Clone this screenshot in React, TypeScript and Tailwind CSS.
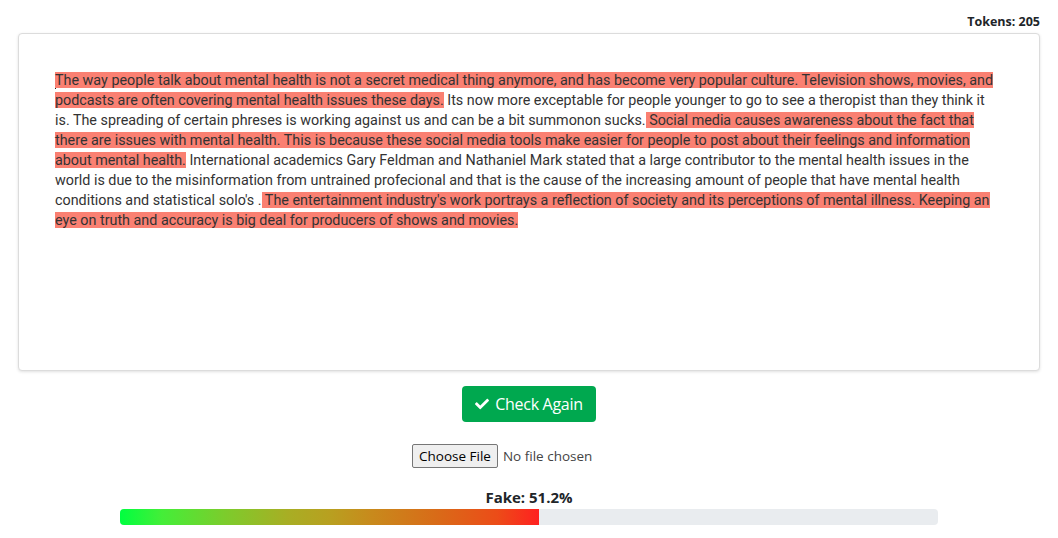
import React from 'react';

type Segment = { text: string; fake: boolean };

const segments: Segment[] = [
  {
    text: 'The way people talk about mental health is not a secret medical thing anymore, and has become very popular culture. Television shows, movies, and podcasts are often covering mental health issues these days.',
    fake: true,
  },
  {
    text: ' Its now more exceptable for people younger to go to see a theropist than they think it is. The spreading of certain phreses is working against us and can be a bit summonon sucks.',
    fake: false,
  },
  {
    text: ' Social media causes awareness about the fact that there are issues with mental health. This is because these social media tools make easier for people to post about their feelings and information about mental health.',
    fake: true,
  },
  {
    text: ' International academics Gary Feldman and Nathaniel Mark stated that a large contributor to the mental health issues in the world is due to the misinformation from untrained profecional and that is the cause of the increasing amount of people that have mental health conditions and statistical solo\'s .',
    fake: false,
  },
  {
    text: " The entertainment industry's work portrays a reflection of society and its perceptions of mental illness. Keeping an eye on truth and accuracy is big deal for producers of shows and movies.",
    fake: true,
  },
];

const FAKE = 51.2;

const App: React.FC = () => {
  return (
    <div className="w-[1058px] min-h-[538px] bg-white px-[18px] text-[#212529] font-['Open_Sans',sans-serif]">
      <div className="pt-[14px] h-[33px] text-right text-[12.5px] font-bold leading-[16px]">Tokens: 205</div>

      <div className="h-[338px] rounded-[4px] border border-[#dcdcdc] bg-white shadow-[0_1px_3px_rgba(0,0,0,0.12)] pl-[36px] pr-[38px] pt-[36px]">
        <p className="font-['Roboto',sans-serif] text-[14.33px] leading-[20px] text-[#333]">
          <span className="inline-block w-px h-[17px] bg-[#222] align-[-4px] -mr-px" />
          {segments.map((s, i) =>
            s.fake ? (
              <span key={i} className="bg-[#fa8072]">
                {s.text}
              </span>
            ) : (
              <span key={i}>{s.text}</span>
            )
          )}
        </p>
      </div>

      <div className="flex justify-center mt-[15px]">
        <button className="flex items-center gap-[5px] h-[36px] pl-[12px] pr-[13px] rounded-[4px] bg-[#00a84f] text-white text-[16px]">
          <svg width="16" height="14" viewBox="0 0 512 512" fill="currentColor">
            <path d="M173.9 439.4l-166.4-166.4c-10-10-10-26.2 0-36.2l36.2-36.2c10-10 26.2-10 36.2 0L192 312.7 432.1 72.6c10-10 26.2-10 36.2 0l36.2 36.2c10 10 10 26.2 0 36.2l-294.4 294.4c-10 10-26.2 10-36.2 0z" />
          </svg>
          <span className="tracking-[-0.3px]">Check Again</span>
        </button>
      </div>

      <div className="flex justify-center mt-[22px]">
        <input type="file" className="text-[13.5px] font-['Open_Sans',sans-serif] text-[#444] w-[234px] file:mr-[5px] file:px-[6px] file:h-[24px] file:border file:border-[#767676] file:rounded-[2px] file:bg-[#efefef] file:text-black" />
      </div>

      <div className="mt-[20px] text-center text-[15px] font-bold leading-[18px]">Fake: {FAKE}%</div>
      <div className="mx-auto mt-[3px] w-4/5 h-[16px] rounded-[4px] bg-[#e9ecef] overflow-hidden">
        <div
          className="h-full bg-[linear-gradient(to_right,#00ff40_0%,#44ee38_10%,#7ccc2c_25%,#a8ae24_40%,#b8a020_50%,#c88a1c_60%,#d86c18_75%,#ec4c18_90%,#ff2020_100%)]"
          style={{ width: `${FAKE}%` }}
        />
      </div>
    </div>
  );
};

export default App;
